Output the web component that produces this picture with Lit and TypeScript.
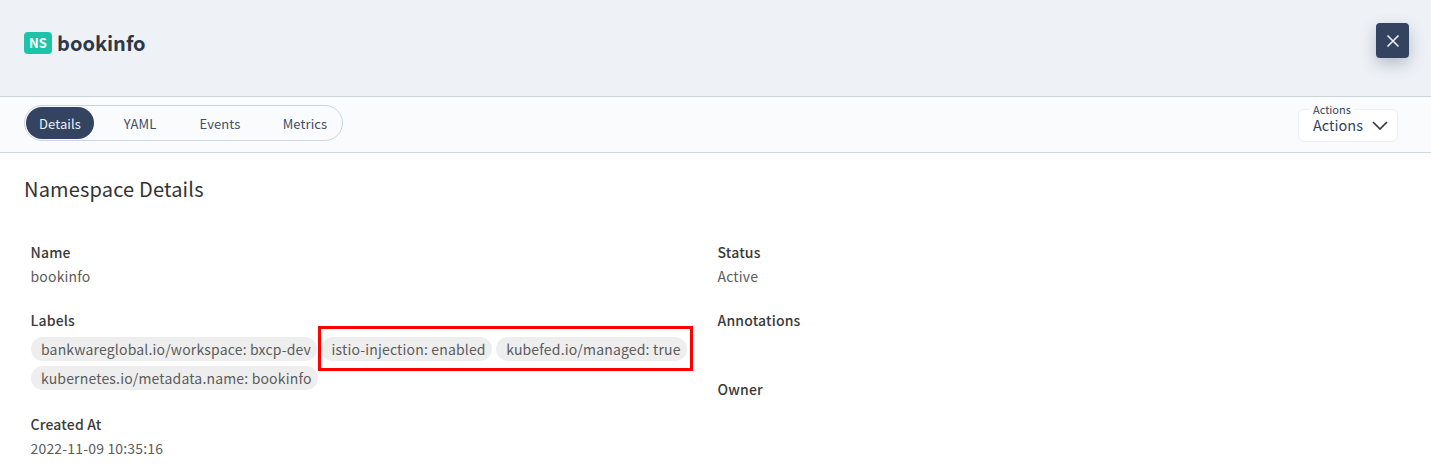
import { LitElement, html, css } from "lit";
import { customElement } from "lit/decorators.js";

@customElement("app-root")
export class AppRoot extends LitElement {
  static styles = css`
    :host {
      display: block;
      width: 1431px;
      height: 467px;
      overflow: hidden;
      position: relative;
      background: #fff;
      font-family: "Noto Sans CJK JP", "Noto Sans", sans-serif;
      color: #333;
      letter-spacing: 0.17px;
    }
    * { box-sizing: border-box; }
    .head {
      height: 97px;
      background: #eef2f7;
      border-bottom: 1px solid #cbd5e0;
      display: flex;
      justify-content: space-between;
      align-items: flex-start;
      padding: 23px 22px 0 24px;
    }
    .title { display: flex; align-items: center; gap: 5px; height: 40px; }
    .ns {
      width: 28px; height: 22px; border-radius: 4px;
      background: #1cc4a8; color: #fff;
      font-size: 13px; font-weight: 700; line-height: 22px; text-align: center;
    }
    .name { font-size: 20px; font-weight: 700; color: #2d3748; line-height: 40px; letter-spacing: 0; }
    .close {
      width: 33px; height: 35px; border-radius: 4px;
      background: #344360;
      display: flex; align-items: center; justify-content: center;
      box-shadow: 0 6px 16px rgba(52, 67, 96, 0.3);
    }
    .bar {
      height: 56px;
      background: #f9fbfd;
      border-bottom: 1px solid #cbd5e0;
      display: flex;
      justify-content: space-between;
      padding: 8px 33px 0 24px;
    }
    .tabs {
      width: 319px; height: 36px;
      border: 1px solid #cbd5e0;
      border-radius: 18px;
      padding: 1px;
      display: flex;
      font-size: 13px;
      letter-spacing: 0.1px;
      color: #3f4e69;
    }
    .tab { display: flex; align-items: center; justify-content: center; height: 32px; }
    .tab.on { width: 68px; background: #344360; color: #edf2f7; border-radius: 16px; }
    .t2 { width: 60px; margin-left: 16px; }
    .t3 { width: 60px; margin-left: 20px; }
    .t4 { width: 60px; margin-left: 25px; }
    .select {
      position: relative;
      width: 100px; height: 33px;
      margin-top: 4px;
      background: #fff;
      border: 1px solid #eceff3;
      border-radius: 6px;
      display: flex; align-items: center;
      padding: 0 0 2px 14px;
      gap: 9px;
      font-size: 14.5px;
      letter-spacing: 0;
      color: #344360;
    }
    .select svg { flex: none; margin-top: 2px; }
    .legend {
      position: absolute;
      left: 10px; top: -7px;
      padding: 0 4px;
      font-size: 11px;
      line-height: 13px;
      color: #344360;
      background: linear-gradient(#f9fbfd 50%, #fff 50%);
    }
    .content { padding: 24px 24px 0 24px; }
    h2 { margin: 0; font-size: 20px; font-weight: 400; line-height: 24px; color: #333; }
    .grid {
      display: grid;
      grid-template-columns: 687px 1fr;
      padding: 41px 0 0 6.5px;
    }
    .col { display: flex; flex-direction: column; }
    .lbl { font-size: 14px; font-weight: 500; line-height: 20px; color: #3a3a3a; }
    .val { font-size: 14px; line-height: 20px; margin-top: 4px; color: #5c5c5c; }
    .f { margin-bottom: 24px; }
    .empty { height: 25px; }
    .chips { display: flex; flex-wrap: wrap; gap: 5px 4px; margin-top: 7px; width: 670px; }
    .chip {
      height: 24px; border-radius: 12px;
      background: #eeeeee;
      padding: 0 6px 0 10.5px;
      font-size: 14px; line-height: 24px; color: #5c5c5c;
    }
    .mark {
      position: absolute;
      left: 318px; top: 326px;
      width: 375px; height: 45px;
      border: 3px solid #f00;
    }
  `;

  render() {
    return html`
      <div class="head">
        <div class="title"><span class="ns">NS</span><span class="name">bookinfo</span></div>
        <div class="close">
          <svg width="14" height="14" viewBox="0 0 14 14"><path d="M1.5 1.5 12.5 12.5M12.5 1.5 1.5 12.5" stroke="#edf2f7" stroke-width="1.6" fill="none"/></svg>
        </div>
      </div>
      <div class="bar">
        <div class="tabs">
          <div class="tab on">Details</div>
          <div class="tab t2">YAML</div>
          <div class="tab t3">Events</div>
          <div class="tab t4">Metrics</div>
        </div>
        <div class="select">
          <span class="legend">Actions</span>
          <span>Actions</span>
          <svg width="16" height="9" viewBox="0 0 16 9"><path d="M1 1 8 8 15 1" stroke="#333" stroke-width="1.6" fill="none"/></svg>
        </div>
      </div>
      <div class="content">
        <h2>Namespace Details</h2>
        <div class="grid">
          <div class="col">
            <div class="f"><div class="lbl">Name</div><div class="val">bookinfo</div></div>
            <div class="f">
              <div class="lbl">Labels</div>
              <div class="chips">
                <span class="chip">bankwareglobal.io/workspace: bxcp-dev</span>
                <span class="chip">istio-injection: enabled</span>
                <span class="chip">kubefed.io/managed: true</span>
                <span class="chip">kubernetes.io/metadata.name: bookinfo</span>
              </div>
            </div>
            <div class="f"><div class="lbl">Created At</div><div class="val">2022-11-09 10:35:16</div></div>
          </div>
          <div class="col">
            <div class="f"><div class="lbl">Status</div><div class="val">Active</div></div>
            <div class="f"><div class="lbl">Annotations</div><div class="empty"></div></div>
            <div class="f"><div class="lbl">Owner</div></div>
          </div>
        </div>
      </div>
      <div class="mark"></div>
    `;
  }
}
